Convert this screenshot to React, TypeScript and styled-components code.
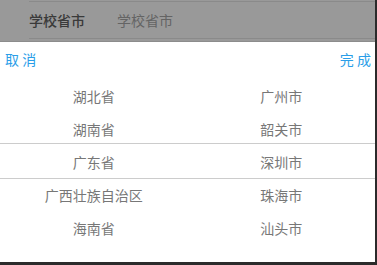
import React from "react";
import styled, { createGlobalStyle } from "styled-components";

const Global = createGlobalStyle`
  html, body { margin: 0; padding: 0; background: #2b2b2b; }
  body { font-family: "Noto Sans CJK SC", "Noto Sans", sans-serif; }
`;

const Frame = styled.div`
  width: 375px;
  height: 262px;
  background: #ffffff;
  display: flex;
  flex-direction: column;
  overflow: hidden;
`;

const TabBar = styled.div`
  height: 42px;
  box-sizing: border-box;
  background: #999999;
  border-bottom: 1px solid #8c8c8c;
  padding-top: 1px;
  padding-left: 29px;
  display: flex;
`;

const TabInner = styled.div`
  flex: 1;
  height: 38px;
  border-top: 1px solid #8a8a8a;
  border-bottom: 1px solid #8a8a8a;
  box-sizing: border-box;
  display: flex;
  align-items: center;
  gap: 32px;
`;

const Tab = styled.span<{ $active?: boolean }>`
  font-size: 14px;
  color: ${(p) => (p.$active ? "#3a3a3a" : "#646464")};
  font-weight: ${(p) => (p.$active ? 500 : 400)};
`;

const Header = styled.div`
  height: 34px;
  display: flex;
  align-items: center;
  justify-content: space-between;
  padding: 0 4px 0 5px;
`;

const Action = styled.span`
  font-size: 14px;
  color: #2a9ee8;
`;

const Wheel = styled.div`
  position: relative;
  flex: 1;
  display: grid;
  grid-template-columns: 1fr 1fr;
  align-content: start;
  padding-top: 3px;
`;

const Column = styled.div`
  display: flex;
  flex-direction: column;
`;

const Item = styled.div`
  height: 33px;
  display: flex;
  align-items: center;
  justify-content: center;
  font-size: 14px;
  color: #777777;
`;

const Indicator = styled.div`
  position: absolute;
  left: 0;
  right: 0;
  top: 67px;
  height: 34px;
  border-top: 1px solid #cccccc;
  border-bottom: 1px solid #cccccc;
  pointer-events: none;
`;

const provinces = ["湖北省", "湖南省", "广东省", "广西壮族自治区", "海南省"];
const cities = ["广州市", "韶关市", "深圳市", "珠海市", "汕头市"];

export default function App() {
  return (
    <>
      <Global />
      <Frame>
        <TabBar>
          <TabInner>
            <Tab $active>学校省市</Tab>
            <Tab>学校省市</Tab>
          </TabInner>
        </TabBar>
        <Header>
          <Action>取 消</Action>
          <Action>完 成</Action>
        </Header>
        <Wheel>
          <Column>
            {provinces.map((p) => (
              <Item key={p}>{p}</Item>
            ))}
          </Column>
          <Column>
            {cities.map((c) => (
              <Item key={c}>{c}</Item>
            ))}
          </Column>
          <Indicator />
        </Wheel>
      </Frame>
    </>
  );
}
